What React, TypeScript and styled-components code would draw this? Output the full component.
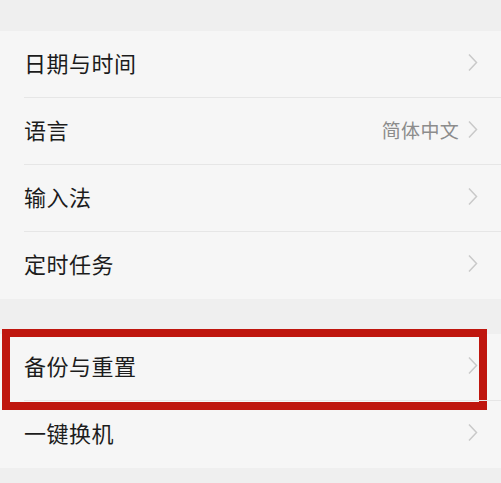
import React from "react";
import styled, { createGlobalStyle } from "styled-components";

const GlobalStyle = createGlobalStyle`
    html, body {
        margin: 0;
        padding: 0;
        background: #efefef;
    }
    body {
        font-family: "Noto Sans CJK SC", "Noto Sans", sans-serif;
    }
`;

const Page = styled.div`
    width: 501px;
    height: 483px;
    background: #efefef;
    padding-top: 31px;
    box-sizing: border-box;
    overflow: hidden;
`;

const Group = styled.div`
    background: #f6f6f6;
    margin-bottom: 35px;
`;

const Row = styled.div<{ $last?: boolean }>`
    position: relative;
    height: 67px;
    display: flex;
    align-items: center;
    padding: 0 22px 5px 24px;
    box-sizing: border-box;

    &::after {
        content: "";
        display: ${(p) => (p.$last ? "none" : "block")};
        position: absolute;
        left: 24px;
        right: 0;
        bottom: 0;
        height: 1px;
        background: #e6e6e6;
    }
`;

const Label = styled.span`
    flex: 1;
    font-size: 22px;
    color: #1c1c1c;
    letter-spacing: 0.5px;
`;

const Value = styled.span`
    font-size: 19px;
    color: #8c8c8c;
    margin-right: 8px;
    letter-spacing: 0.3px;
`;

const Highlight = styled.div`
    position: absolute;
    left: 2px;
    top: -5px;
    width: 485px;
    height: 81px;
    border: 8px solid #bf160e;
    box-sizing: border-box;
    pointer-events: none;
`;

const Chevron = () => (
    <svg width="12" height="19" viewBox="0 0 12 19">
        <path d="M2 1.5 L9.5 9.5 L2 17.5" fill="none" stroke="#c9c9c9" strokeWidth="1.5" />
    </svg>
);

interface Item {
    label: string;
    value?: string;
    marked?: boolean;
}

const groups: Item[][] = [
    [
        { label: "日期与时间" },
        { label: "语言", value: "简体中文" },
        { label: "输入法" },
        { label: "定时任务" },
    ],
    [
        { label: "备份与重置", marked: true },
        { label: "一键换机" },
    ],
];

const App: React.FC = () => {
    return (
        <>
            <GlobalStyle />
            <Page>
                {groups.map((items, gi) => (
                    <Group key={gi}>
                        {items.map((item, i) => (
                            <Row key={item.label} $last={i === items.length - 1}>
                                <Label>{item.label}</Label>
                                {item.value && <Value>{item.value}</Value>}
                                <Chevron />
                                {item.marked && <Highlight />}
                            </Row>
                        ))}
                    </Group>
                ))}
            </Page>
        </>
    );
};

export default App;
